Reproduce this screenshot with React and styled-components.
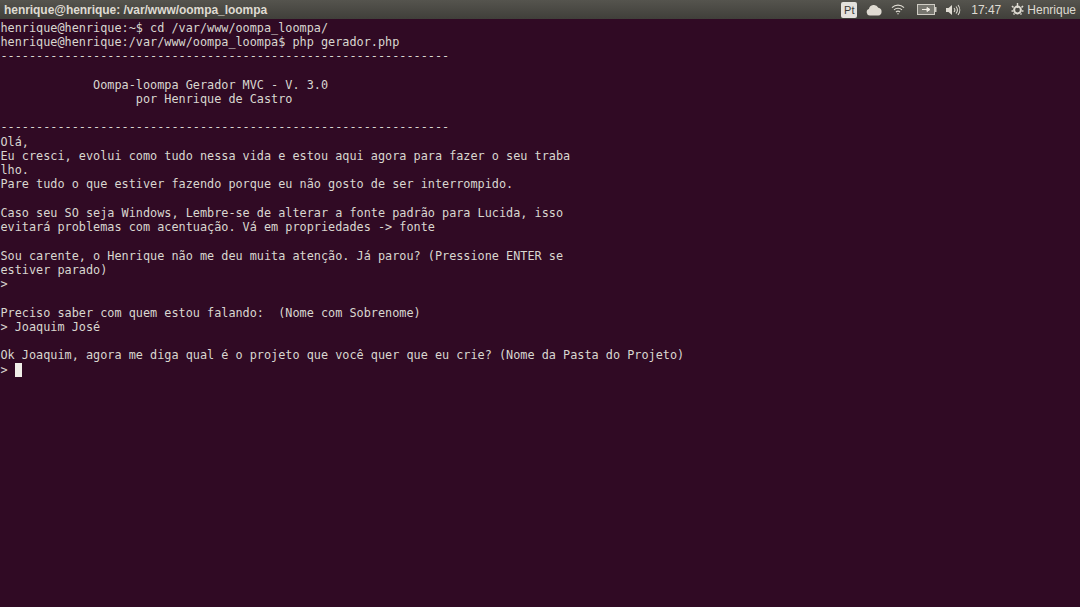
import React from 'react';
import styled, { createGlobalStyle } from 'styled-components';

const lines = [
   'henrique@henrique:~$ cd /var/www/oompa_loompa/',
   'henrique@henrique:/var/www/oompa_loompa$ php gerador.php',
   '---------------------------------------------------------------',
   '',
   '             Oompa-loompa Gerador MVC - V. 3.0',
   '                   por Henrique de Castro',
   '',
   '---------------------------------------------------------------',
   'Olá,',
   'Eu cresci, evolui como tudo nessa vida e estou aqui agora para fazer o seu traba',
   'lho.',
   'Pare tudo o que estiver fazendo porque eu não gosto de ser interrompido.',
   '',
   'Caso seu SO seja Windows, Lembre-se de alterar a fonte padrão para Lucida, isso',
   'evitará problemas com acentuação. Vá em propriedades -> fonte',
   '',
   'Sou carente, o Henrique não me deu muita atenção. Já parou? (Pressione ENTER se',
   'estiver parado)',
   '>',
   '',
   'Preciso saber com quem estou falando:  (Nome com Sobrenome)',
   '> Joaquim José',
   '',
   'Ok Joaquim, agora me diga qual é o projeto que você quer que eu crie? (Nome da Pasta do Projeto)',
];

const GlobalStyle = createGlobalStyle`
   html, body {
      margin: 0;
      height: 100%;
      background: #300a24;
      overflow: hidden;
   }
`;

const Screen = styled.div`
   width: 1080px;
   height: 607px;
   display: flex;
   flex-direction: column;
   background: #300a24;
`;

const TopBar = styled.div`
   height: 19px;
   flex: none;
   display: flex;
   align-items: center;
   justify-content: space-between;
   padding: 0 4px;
   background: linear-gradient(#55544e, #403f3a);
   font-family: "Liberation Sans", sans-serif;
   font-size: 12px;
   color: #dfdbd2;
`;

const Title = styled.div`
   font-weight: bold;
   letter-spacing: -0.05px;
   white-space: pre;
`;

const Tray = styled.div`
   display: flex;
   align-items: center;
   gap: 10px;
`;

const KeyboardBadge = styled.div`
   width: 16px;
   height: 16px;
   display: flex;
   align-items: center;
   justify-content: center;
   background: #e4e2dd;
   color: #3c3b37;
   font-size: 11px;
   border-radius: 2px;
`;

const TrayIcon = styled.svg`
   display: block;
   flex: none;
   margin-left: ${props => props.$shift || 0}px;
`;

const UserMenu = styled.div`
   display: flex;
   align-items: center;
   gap: 3px;
`;

const Terminal = styled.div`
   flex: 1;
   padding: 1.5px 0 0 0.5px;
   font-family: "DejaVu Sans Mono", monospace;
   font-size: 11.83px;
   line-height: 14.25px;
   color: #d9d7d0;
`;

const Line = styled.div`
   height: 14.25px;
   white-space: pre;
`;

const Cursor = styled.span`
   display: inline-block;
   width: 7px;
   height: 14px;
   vertical-align: top;
   background: #f0eee8;
`;

const App = () => (
   <>
      <GlobalStyle />
      <Screen>
         <TopBar>
            <Title>henrique@henrique: /var/www/oompa_loompa</Title>
            <Tray>
               <KeyboardBadge>Pt</KeyboardBadge>
               <TrayIcon $shift={-1} width="16" height="12" viewBox="0 0 16 12" fill="#dfdbd2">
                  <path d="M3.800 11.500a3.300 3.300 0 0 1-.9-6.400A5 5 0 0 1 12.300 3.800a3.900 3.900 0 0 1 0 7.700z" />
               </TrayIcon>
               <TrayIcon $shift={-1} width="14" height="11" viewBox="0 0 14 11" fill="none" stroke="#dfdbd2" strokeWidth="1.2">
                  <path d="M1 3.600a8.600 8.600 0 0 1 12 0M3 5.900a5.700 5.700 0 0 1 8 0M5 8a2.800 2.800 0 0 1 4 0" />
                  <circle cx="7" cy="9.800" r=".7" fill="#dfdbd2" stroke="none" />
               </TrayIcon>
               <TrayIcon $shift={2} width="20" height="11" viewBox="0 0 20 11">
                  <rect x=".5" y=".5" width="17" height="10" fill="#77766f" stroke="#cfccc4" />
                  <rect x="18" y="3" width="1.500" height="5" fill="#cfccc4" />
                  <path d="M5 5.500h8M10 3.500l3 2-3 2z" stroke="#eeeae2" strokeWidth="1" fill="#eeeae2" />
               </TrayIcon>
               <TrayIcon $shift={-2} width="16" height="12" viewBox="0 0 16 12" fill="none" stroke="#dfdbd2" strokeWidth="1.100">
                  <path d="M1 4h2.500L7 1v10L3.500 8H1z" fill="#dfdbd2" stroke="none" />
                  <path d="M9 4a3 3 0 0 1 0 4M11 2.500a5.500 5.500 0 0 1 0 7M13 1a8 8 0 0 1 0 10" />
               </TrayIcon>
               <span>17:47</span>
               <UserMenu>
                  <TrayIcon width="13" height="13" viewBox="0 0 13 13" fill="none" stroke="#dfdbd2">
                     <circle cx="6.500" cy="7" r="3.400" strokeWidth="2" />
                     <path d="M6.500 0v5" strokeWidth="1.400" />
                     <path d="M1 3l1.500 1.500M12 3l-1.500 1.500M.5 8h1.500M11 8h1.500M2.500 11.500l1-1M10.500 11.500l-1-1" strokeWidth="1.600" />
                  </TrayIcon>
                  <span>Henrique</span>
               </UserMenu>
            </Tray>
         </TopBar>
         <Terminal>
            {lines.map((text, index) => <Line key={index}>{text}</Line>)}
            <Line>{'> '}<Cursor /></Line>
         </Terminal>
      </Screen>
   </>
);

export default App;
